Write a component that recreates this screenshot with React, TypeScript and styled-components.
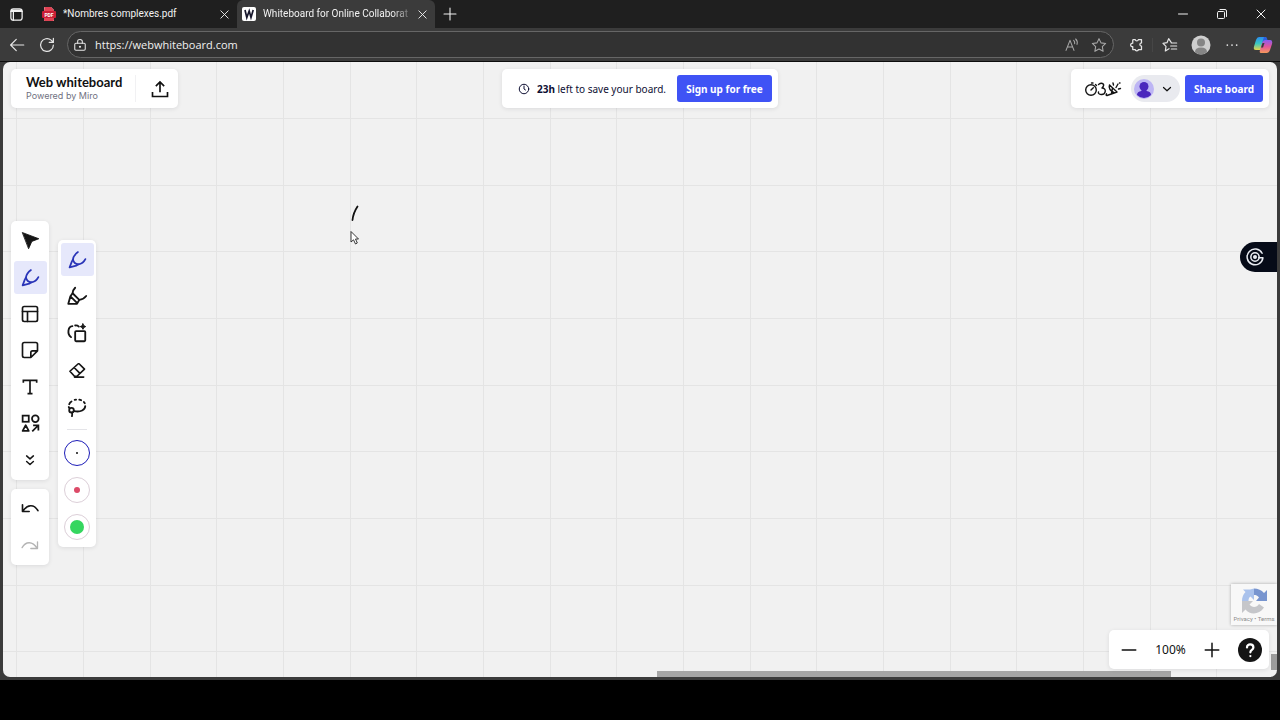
import React, { useState } from "react";
import styled, { createGlobalStyle, css } from "styled-components";

const GlobalStyle = createGlobalStyle`
  *, *::before, *::after { box-sizing: border-box; }
  body { margin: 0; background: #000; }
  button, input { font: inherit; color: inherit; margin: 0; padding: 0; border: 0; background: none; }
  button { cursor: pointer; display: flex; align-items: center; justify-content: center; flex: none; }
  svg { display: block; flex: none; }
`;

const UI_FONT = `"Open Sans", "Noto Sans", sans-serif`;
const BOARD_FONT = `"Noto Sans", "Open Sans", sans-serif`;

/* ---------- browser window ---------- */

const Screen = styled.div`
  display: flex;
  flex-direction: column;
  height: 100vh;
  padding-bottom: 40px;
  background: #000;
  font-family: ${UI_FONT};
`;

const BrowserWindow = styled.div`
  flex: 1;
  min-height: 0;
  display: flex;
  flex-direction: column;
  background: #3b3b3b;
`;

const TitleBar = styled.header`
  display: flex;
  align-items: stretch;
  height: 28px;
  background: #1f1f1f;
  color: #f2f2f2;
  font-family: Roboto, "Open Sans", sans-serif;
  font-size: 10px;
`;

const TabMenuButton = styled.button`
  width: 33px;
`;

const Tab = styled.div<{ $active?: boolean }>`
  display: flex;
  align-items: center;
  width: ${(p) => (p.$active ? 198 : 204)}px;
  padding: 0 6px 0 ${(p) => (p.$active ? 5 : 9)}px;
  border-radius: 6px 6px 0 0;
  background: ${(p) => (p.$active ? "#3b3b3b" : "transparent")};
`;

const TabTitle = styled.span<{ $fade?: boolean }>`
  flex: 1;
  min-width: 0;
  margin-left: 7px;
  overflow: hidden;
  white-space: nowrap;
  line-height: 16px;
  ${(p) =>
    p.$fade &&
    css`
      mask-image: linear-gradient(to right, #000 85%, transparent);
    `}
`;

const TabClose = styled.button`
  width: 14px;
  height: 14px;
`;

const NewTab = styled.button`
  width: 30px;
`;

const WindowControls = styled.div`
  display: flex;
  margin-left: auto;
  button {
    width: 39px;
  }
`;

const NavBar = styled.nav`
  display: flex;
  align-items: center;
  height: 34px;
  padding: 0 2px;
  border-bottom: 1px solid #0c0c0c;
  color: #e6e6e6;
`;

const NavButton = styled.button`
  width: 30px;
  height: 28px;
`;

const AddressBar = styled.label`
  flex: 1;
  display: flex;
  align-items: center;
  height: 27px;
  margin: 0 7px 0 5px;
  padding: 0 1px 0 5px;
  border: 1px solid #666;
  border-radius: 14px;
  background: #323232;
`;

const AddressInput = styled.input`
  flex: 1;
  min-width: 0;
  margin-left: 8px;
  outline: none;
  color: #f0f0f0;
  font-size: 11px;
  line-height: 18px;
`;

const AddressAction = styled.button`
  width: 27px;
  height: 24px;
  color: #a8a8a8;
`;

const ToolbarIcon = styled.button`
  width: 31px;
  height: 28px;
`;

const ToolbarDivider = styled.span`
  width: 1px;
  height: 14px;
  margin-right: 1px;
  background: #464646;
`;

/* ---------- board ---------- */

const line = (dir: string, at: number) =>
  `linear-gradient(${dir}, transparent ${at}px, #e4e4e4 ${at}px, #e4e4e4 ${at + 1}px, transparent ${at + 1}px)`;

const Board = styled.main`
  position: relative;
  flex: 1;
  min-height: 0;
  margin: 0 3px 3px;
  overflow: hidden;
  border-radius: 7px;
  background-color: #f1f1f1;
  background-image: ${[13, 80, 147].map((n) => line("to right", n)).join(",")},
    ${[56, 123, 189].map((n) => line("to bottom", n)).join(",")};
  background-size: 200px 200px;
  color: #111;
  font-family: ${BOARD_FONT};
`;

const Ink = styled.svg`
  position: absolute;
  inset: 0;
`;

const panel = css`
  background: #fff;
  border-radius: 5px;
  box-shadow: 0 1px 4px rgba(30, 30, 40, 0.1);
`;

const TopRow = styled.div`
  position: relative;
  display: grid;
  grid-template-columns: 1fr auto 1fr;
  align-items: start;
  padding: 7px 8px 0;
`;

const Brand = styled.section`
  ${panel}
  justify-self: start;
  display: flex;
  align-items: center;
  height: 39px;
  padding-left: 15px;
  font-family: Inter, sans-serif;
`;

const BrandText = styled.div`
  display: flex;
  flex-direction: column;
  padding: 0 13px 1px 0;
  border-right: 1px solid #f1f1f3;
`;

const BrandName = styled.strong`
  font-family: Lato, Inter, sans-serif;
  font-size: 13px;
  line-height: 15px;
  font-weight: 700;
`;

const BrandNote = styled.span`
  color: #70717f;
  font-size: 9px;
  line-height: 11px;
`;

const ExportButton = styled.button`
  width: 36px;
  height: 36px;
  margin-left: 6px;
`;

const Notice = styled.section`
  ${panel}
  display: flex;
  align-items: center;
  height: 39px;
  padding: 0 6px 0 16px;
  color: #0e0f33;
  font-size: 10px;
`;

const NoticeText = styled.p`
  margin: 0 11px 0 7px;
  line-height: 16px;
  white-space: nowrap;
`;

const PrimaryButton = styled.button<{ $width: number }>`
  width: ${(p) => p.$width}px;
  height: 27px;
  border-radius: 3px;
  background: #3f53f5;
  color: #fff;
  font-size: 10px;
  font-weight: 700;
  line-height: 16px;
  white-space: nowrap;
`;

const Account = styled.section`
  ${panel}
  justify-self: end;
  display: flex;
  align-items: center;
  height: 39px;
  padding: 0 6px 0 12px;
`;

const Reactions = styled.button`
  width: 40px;
  height: 30px;
`;

const ProfileButton = styled.button`
  gap: 7px;
  height: 27px;
  margin: 0 5px 0 8px;
  padding: 0 7px 0 3px;
  border-radius: 14px;
  background: #e9eaef;
`;

const Rails = styled.div`
  position: absolute;
  top: 47px;
  bottom: 0;
  left: 8px;
  display: flex;
  align-items: center;
  gap: 9px;
`;

const RailColumn = styled.div`
  display: flex;
  flex-direction: column;
  gap: 9px;
`;

const Rail = styled.div<{ $height?: number }>`
  ${panel}
  display: flex;
  flex-direction: column;
  align-items: center;
  justify-content: space-between;
  gap: 3px;
  width: 38px;
  height: ${(p) => (p.$height ? `${p.$height}px` : "auto")};
  padding: 3px;
`;

const PenRail = styled(Rail)`
  gap: 4px;
`;

const Tool = styled.button<{ $active?: boolean }>`
  width: 33px;
  height: 33px;
  border-radius: 3px;
  color: ${(p) => (p.$active ? "#2a35b8" : "#151515")};
  background: ${(p) => (p.$active ? "#e6e8fb" : "transparent")};
  &:disabled {
    color: #b4b4b4;
  }
`;

const RailDivider = styled.hr`
  width: 20px;
  height: 1px;
  margin: 1px 0 3px;
  border: 0;
  background: #e4e4e8;
`;

const Swatch = styled.button<{ $selected?: boolean }>`
  width: 26px;
  height: 26px;
  margin: 3px 0 4px;
  border: ${(p) => (p.$selected ? "1px solid #1c1cb8" : "1px solid #dccfd8")};
  border-radius: 50%;
`;

const Dot = styled.span<{ $size: number; $color: string }>`
  width: ${(p) => p.$size}px;
  height: ${(p) => p.$size}px;
  border-radius: 50%;
  background: ${(p) => p.$color};
`;

const RecorderButton = styled.button`
  position: absolute;
  top: 180px;
  right: 0;
  width: 37px;
  height: 30px;
  padding-right: 7px;
  border-radius: 15px 0 0 15px;
  background: #060b18;
  color: #e9ecf2;
`;

const Captcha = styled.aside`
  position: absolute;
  right: 0;
  bottom: 52px;
  display: flex;
  flex-direction: column;
  align-items: center;
  width: 46px;
  height: 41px;
  padding-top: 3px;
  background: #f8f8f8;
  box-shadow: 0 0 3px rgba(0, 0, 0, 0.3);
  color: #8c8c8c;
  font-family: Roboto, sans-serif;
  font-size: 6px;
  line-height: 8px;
  a {
    color: inherit;
    text-decoration: none;
  }
`;

const ZoomPanel = styled.section`
  ${panel}
  position: absolute;
  right: 8px;
  bottom: 8px;
  display: flex;
  align-items: center;
  height: 39px;
  padding: 0 7px 0 5px;
  font-size: 12px;
`;

const ZoomStep = styled.button`
  width: 30px;
  height: 30px;
`;

const ZoomValue = styled.output`
  width: 53px;
  text-align: center;
  line-height: 18px;
`;

const HelpButton = styled.button`
  width: 24px;
  height: 24px;
  margin-left: 11px;
  border-radius: 50%;
  background: #151515;
  color: #fff;
`;

const HorizontalThumb = styled.div`
  position: absolute;
  right: 106px;
  bottom: 0;
  width: 514px;
  height: 6px;
  background: #a5a5a5;
`;

const VerticalThumb = styled.div`
  position: absolute;
  right: 0;
  bottom: 7px;
  width: 6px;
  height: 16px;
  background: #9c9c9c;
`;

/* ---------- icons ---------- */

type IconProps = { size?: number; width?: number; children: React.ReactNode };

const Icon = ({ size = 20, width = 2, children }: IconProps) => (
  <svg
    width={size}
    height={size}
    viewBox="0 0 24 24"
    fill="none"
    stroke="currentColor"
    strokeWidth={width}
    strokeLinecap="round"
    strokeLinejoin="round"
    aria-hidden="true"
  >
    {children}
  </svg>
);

const CloseIcon = ({ size = 12 }: { size?: number }) => (
  <Icon size={size}>
    <path d="M4 4l16 16M20 4L4 20" />
  </Icon>
);

const PenIcon = () => (
  <Icon size={21}>
    <path d="M12.500 3.500C9 6 7.200 9 6.800 12L5.500 14.500L3 21L10.500 19L13 17.500C16.500 17 19.500 14.500 21 11.500" />
    <path d="M6.800 12C7.500 15 9.500 17.200 13 17.500" />
  </Icon>
);

const HighlighterIcon = () => (
  <Icon size={22}>
    <path d="M10 3C8 5 7.200 7 7.200 9L14.500 16.200C17.500 16 20 14.500 22 12" />
    <path d="M7.200 9L4.800 12.300L2.500 20.500H12L14.500 16.200M4.800 12.300L12 19.500" />
  </Icon>
);

const SmartDrawIcon = () => (
  <Icon size={22}>
    <rect x="10" y="10" width="11" height="11" rx="1" />
    <path d="M5.500 16.500C1 13 2 5 7 4.500M10 3.800C12 3.500 13 4 14 5" />
    <path d="M18.500 2l1 2 2 1-2 1-1 2-1-2-2-1 2-1z" fill="currentColor" strokeWidth="1" />
  </Icon>
);

const EraserIcon = () => (
  <Icon size={20}>
    <path d="M13.500 4.500L3.500 13.500L9 19.500H12L21 11L14.500 4.500zM8.500 9L15.500 16M9 20.500H20" />
  </Icon>
);

const LassoIcon = () => (
  <Icon size={22}>
    <path d="M3.500 9C4 7.500 5 6.500 6 6M9.500 4.300L11 4M14.500 4L16.500 4.600M19.500 6.500L20.500 8" />
    <path d="M21 11C21 15 16 18 9 16.500" />
    <circle cx="6" cy="15.500" r="2.500" />
    <path d="M6.500 18C7 19.500 7 20.500 6.500 22M3.500 13L3 12" />
  </Icon>
);

const CursorIcon = () => (
  <Icon size={21} width={1}>
    <path d="M3 3L21.500 10L13.500 13L10 21z" fill="currentColor" />
  </Icon>
);

const TemplateIcon = () => (
  <Icon>
    <rect x="3" y="3" width="18" height="18" rx="2" />
    <path d="M3 9H21M9 9V21" />
  </Icon>
);

const StickyIcon = () => (
  <Icon>
    <path d="M5 3H19Q21 3 21 5V13L13 21H5Q3 21 3 19V5Q3 3 5 3zM21 13H15Q13 13 13 15V21" />
  </Icon>
);

const TextIcon = () => (
  <Icon>
    <path d="M4 7V4H20V7M12 4V20M9 20H15" strokeLinecap="butt" strokeLinejoin="miter" />
  </Icon>
);

const ShapesIcon = () => (
  <Icon size={21}>
    <rect x="3" y="3" width="7" height="7" strokeLinejoin="miter" />
    <circle cx="17.500" cy="6.500" r="3.800" />
    <path d="M6.500 14L10 20.500H3z" />
    <path d="M14 21L21 14M15 14H21V20" strokeLinecap="butt" strokeLinejoin="miter" />
  </Icon>
);

const MoreIcon = () => (
  <Icon size={18}>
    <path d="M7.500 6.500L12 10.500L16.500 6.500M7.500 14L12 18L16.500 14" />
  </Icon>
);

const UndoIcon = () => (
  <Icon size={20}>
    <path d="M3 7V15H11M3.500 14.500C9 6 17 6 21.500 14" />
  </Icon>
);

const RedoIcon = () => (
  <Icon size={20} width={1.6}>
    <path d="M21 7V15H13M20.500 14.500C15 6 7 6 2.500 14" />
  </Icon>
);

const PdfIcon = () => (
  <svg width="14" height="14" viewBox="0 0 14 14" aria-hidden="true">
    <path d="M3 0H9L12 3V14H3Q2 14 2 13V1Q2 0 3 0z" fill="#f3dcdf" />
    <path d="M2.500 0H9L12 3V5H2zM2 10H12V13Q12 14 11 14H3Q2 14 2 13z" fill="#df4253" />
    <rect y="4" width="14" height="7" rx="1" fill="#c91f35" />
    <text x="7" y="9.500" textAnchor="middle" fontFamily="Roboto, sans-serif" fontSize="5" fontWeight="700" fill="#fff">
      PDF
    </text>
  </svg>
);

const SiteIcon = () => (
  <svg width="14" height="14" viewBox="0 0 14 14" aria-hidden="true">
    <rect width="14" height="14" rx="2" fill="#fff" />
    <path d="M3 3L4.800 10.500L7.200 4L9 10.500L11.200 3" fill="none" stroke="#17172c" strokeWidth="1.700" />
  </svg>
);

const CopilotIcon = () => (
  <svg width="20" height="20" viewBox="0 0 20 20" aria-hidden="true">
    <defs>
      <linearGradient id="cool" x1="0" y1="0" x2="0" y2="1">
        <stop offset="0" stopColor="#2b8cf0" />
        <stop offset="0.5" stopColor="#39c7c0" />
        <stop offset="1" stopColor="#e8d44a" />
      </linearGradient>
      <linearGradient id="warm" x1="0" y1="0" x2="0" y2="1">
        <stop offset="0" stopColor="#8a5cf0" />
        <stop offset="0.5" stopColor="#e3559c" />
        <stop offset="1" stopColor="#f59a5a" />
      </linearGradient>
    </defs>
    <path d="M6 2H12Q14 2 13.500 4L11 13Q10.500 15 8 15H3Q0 15 1 11.500L3 5Q4 2 6 2z" fill="url(#cool)" />
    <path d="M12 5H17Q20 5 19 9L17 15Q16 18 13.500 18H8Q6 18 7 15L9 8Q10 5 12 5z" fill="url(#warm)" />
    <path d="M11 2H12Q14 2 14.500 5H12Q10 5 9 8z" fill="#2d5ee0" />
    <path d="M9.500 8H11.500L10 12.500H8z" fill="#3b3b3b" />
  </svg>
);

const BrowserAvatar = () => (
  <svg width="20" height="20" viewBox="0 0 20 20" aria-hidden="true">
    <circle cx="10" cy="10" r="9.500" fill="#cfcfcf" />
    <circle cx="10" cy="7.500" r="4" fill="#868686" />
    <path d="M4 17Q4 12.500 10 12.500T16 17Q13 19.500 10 19.500T4 17z" fill="#868686" />
  </svg>
);

const ReactionsIcon = () => (
  <svg width="38" height="18" viewBox="0 0 38 18" fill="none" stroke="#151515" strokeWidth="1.400" strokeLinecap="round" strokeLinejoin="round" aria-hidden="true">
    <circle cx="7" cy="10" r="5.300" />
    <path d="M7 10L9.300 7.700M7.500 3L9 3M11.500 4.500L12.500 5.500" />
    <path d="M14.500 4.500C18 2 22 4 18 8C23 8 22 15 17 14.500C15 14.500 14 13 14.500 12" />
    <path d="M25.500 5L33 12L23 15.500Q21.500 15.500 22.500 13.800M25.500 5Q24.500 7.500 26 9.500T30.500 13M28.500 8L27.500 13.500" />
    <path d="M29.500 5L29 3M32 7.500L34 4M34.500 9L36.500 8.500M35.500 3H36" />
  </svg>
);

const BoardAvatar = () => (
  <svg width="20" height="20" viewBox="0 0 20 20" aria-hidden="true">
    <circle cx="10" cy="10" r="10" fill="#bdb5f4" />
    <circle cx="10" cy="7.500" r="4.500" fill="#4a27bd" />
    <path d="M7.500 10H12.500V12Q17 12.500 17 16Q14 19 10 19T3 16Q3 12.500 7.500 12z" fill="#4a27bd" />
  </svg>
);

const CaptchaLogo = () => (
  <svg width="28" height="28" viewBox="0 0 28 28" aria-hidden="true">
    <path d="M14 1.500C18 1.500 21.500 3 24 6L27 3V14H16L19 10.500C17.500 8.500 16 8 14 8z" fill="#7895cf" />
    <path d="M14 1.500V13L10.500 9.500C9 10.500 8.500 12 8.500 14H2C2 10.500 3 7.500 5.500 5L3 2.500H10z" fill="#aac2ec" />
    <path d="M2 14H13L9.500 17.500C12 21 17 20.500 19 17L24 20.500C19 28 10 28 5.500 22.500L2 26z" fill="#c5c6ca" />
  </svg>
);

/* ---------- page ---------- */

const TOOLS = [
  { name: "Select", icon: <CursorIcon /> },
  { name: "Pen", icon: <PenIcon /> },
  { name: "Templates", icon: <TemplateIcon /> },
  { name: "Sticky note", icon: <StickyIcon /> },
  { name: "Text", icon: <TextIcon /> },
  { name: "Shapes", icon: <ShapesIcon /> },
  { name: "More", icon: <MoreIcon /> },
];

const PENS = [
  { name: "Pen", icon: <PenIcon /> },
  { name: "Highlighter", icon: <HighlighterIcon /> },
  { name: "Smart drawing", icon: <SmartDrawIcon /> },
  { name: "Eraser", icon: <EraserIcon /> },
  { name: "Lasso", icon: <LassoIcon /> },
];

const SWATCHES = [
  { name: "Black, thin", size: 2, color: "#111" },
  { name: "Red, medium", size: 6, color: "#dc4a68" },
  { name: "Green, thick", size: 14, color: "#35d65f" },
];

export default function App() {
  const [tool, setTool] = useState(1);
  const [pen, setPen] = useState(0);
  const [swatch, setSwatch] = useState(0);
  const [url, setUrl] = useState("https://webwhiteboard.com");

  return (
    <Screen>
      <GlobalStyle />
      <BrowserWindow>
        <TitleBar>
          <TabMenuButton aria-label="Tab actions">
            <Icon size={15}>
              <rect x="3" y="3" width="18" height="18" rx="4" />
              <path d="M3 7H21M7 7V21M4 5H20" />
            </Icon>
          </TabMenuButton>
          <Tab>
            <PdfIcon />
            <TabTitle>*Nombres complexes.pdf</TabTitle>
            <TabClose aria-label="Close tab">
              <CloseIcon size={11} />
            </TabClose>
          </Tab>
          <Tab $active>
            <SiteIcon />
            <TabTitle $fade>Whiteboard for Online Collaborat</TabTitle>
            <TabClose aria-label="Close tab">
              <CloseIcon size={11} />
            </TabClose>
          </Tab>
          <NewTab aria-label="New tab">
            <Icon size={16} width={1.6}>
              <path d="M12 3V21M3 12H21" />
            </Icon>
          </NewTab>
          <WindowControls>
            <button aria-label="Minimize">
              <Icon size={12}>
                <path d="M3 12H21" />
              </Icon>
            </button>
            <button aria-label="Restore">
              <Icon size={12}>
                <rect x="3" y="7" width="14" height="14" rx="2" />
                <path d="M8 3H18Q21 3 21 6V17" />
              </Icon>
            </button>
            <button aria-label="Close window">
              <CloseIcon />
            </button>
          </WindowControls>
        </TitleBar>

        <NavBar>
          <NavButton aria-label="Back">
            <Icon size={18} width={1.6}>
              <path d="M21 12H4M11 4.500L3.500 12L11 19.500" />
            </Icon>
          </NavButton>
          <NavButton aria-label="Reload">
            <Icon size={18} width={1.6}>
              <path d="M20.500 12A8.500 8.500 0 1 1 17.500 5.500L20 8M20.500 3V8.500H15" />
            </Icon>
          </NavButton>
          <AddressBar>
            <Icon size={14} width={1.8}>
              <rect x="3" y="9" width="18" height="12" rx="2" />
              <path d="M8 9V6Q8 2.500 12 2.500T16 6V9" />
              <circle cx="12" cy="15" r="1" fill="currentColor" />
            </Icon>
            <AddressInput aria-label="Address" value={url} onChange={(e) => setUrl(e.target.value)} />
            <AddressAction aria-label="Read aloud">
              <Icon size={16} width={1.6}>
                <path d="M3 20L9 5L15 20M5 15H13M14.500 5Q16.500 7 16 10M17.500 3Q21 6.500 19.500 11" />
              </Icon>
            </AddressAction>
            <AddressAction aria-label="Add to favorites">
              <Icon size={16} width={1.6}>
                <path d="M12 2.500L15 8.800L22 9.700L17 14.500L18.200 21.500L12 18L5.800 21.500L7 14.500L2 9.700L9 8.800z" />
              </Icon>
            </AddressAction>
          </AddressBar>
          <ToolbarIcon aria-label="Extensions">
            <Icon size={15}>
              <path d="M7 4H10C10.500 7 14.500 7 15 4H20V9.500C16.500 10 16.500 14 20 14.500V20H15C15 23 10 23 10 20H6V15.500C1.500 16 1.500 9.500 6 10V5Q6 4 7 4z" />
            </Icon>
          </ToolbarIcon>
          <ToolbarDivider />
          <ToolbarIcon aria-label="Favorites">
            <Icon size={16} width={1.8}>
              <path d="M14 8.500L10 2.500L7.500 8.500L1.500 9.500L6 14L5 21L10.500 17.500M14 9H22M13 13.500H22M14 18H22" />
            </Icon>
          </ToolbarIcon>
          <ToolbarIcon aria-label="Profile">
            <BrowserAvatar />
          </ToolbarIcon>
          <ToolbarIcon aria-label="Settings and more">
            <Icon size={14}>
              <path d="M4 12h.01M12 12h.01M20 12h.01" strokeWidth="3" />
            </Icon>
          </ToolbarIcon>
          <ToolbarIcon aria-label="Copilot">
            <CopilotIcon />
          </ToolbarIcon>
        </NavBar>

        <Board>
          <Ink width="600" height="400" aria-hidden="true">
            <path d="M354.500 144.500C351.500 149 350 153 349.500 158" fill="none" stroke="#111" strokeWidth="1.800" strokeLinecap="round" />
            <path d="M348 169.500V180L350.500 177.800L352.500 182L354.300 181L352.500 177H355.500z" fill="#fff" stroke="#222" strokeWidth="0.900" />
          </Ink>

          <TopRow>
            <Brand>
              <BrandText>
                <BrandName>Web whiteboard</BrandName>
                <BrandNote>Powered by Miro</BrandNote>
              </BrandText>
              <ExportButton aria-label="Export board">
                <Icon size={20}>
                  <path d="M12 16V4M7 8.500L12 3.500L17 8.500M3 15.500V21H21V15.500" strokeLinecap="butt" strokeLinejoin="miter" />
                </Icon>
              </ExportButton>
            </Brand>

            <Notice>
              <Icon size={12}>
                <circle cx="12" cy="12" r="9.500" />
                <path d="M12 6V12L15 14" />
              </Icon>
              <NoticeText>
                <b>23h</b> left to save your board.
              </NoticeText>
              <PrimaryButton $width={95}>Sign up for free</PrimaryButton>
            </Notice>

            <Account>
              <Reactions aria-label="Reactions and timer">
                <ReactionsIcon />
              </Reactions>
              <ProfileButton aria-label="Account menu">
                <BoardAvatar />
                <Icon size={12} width={2.4}>
                  <path d="M5 9L12 15.500L19 9" />
                </Icon>
              </ProfileButton>
              <PrimaryButton $width={78}>Share board</PrimaryButton>
            </Account>
          </TopRow>

          <Rails>
            <RailColumn>
              <Rail $height={259} role="toolbar" aria-label="Tools">
                {TOOLS.map((t, i) => (
                  <Tool key={t.name} aria-label={t.name} $active={i === tool} onClick={() => setTool(i)}>
                    {t.icon}
                  </Tool>
                ))}
              </Rail>
              <Rail $height={76} role="toolbar" aria-label="History">
                <Tool aria-label="Undo">
                  <UndoIcon />
                </Tool>
                <Tool aria-label="Redo" disabled>
                  <RedoIcon />
                </Tool>
              </Rail>
            </RailColumn>
            <PenRail role="toolbar" aria-label="Drawing tools">
              {PENS.map((p, i) => (
                <Tool key={p.name} aria-label={p.name} $active={i === pen} onClick={() => setPen(i)}>
                  {p.icon}
                </Tool>
              ))}
              <RailDivider />
              {SWATCHES.map((s, i) => (
                <Swatch key={s.name} aria-label={s.name} $selected={i === swatch} onClick={() => setSwatch(i)}>
                  <Dot $size={s.size} $color={s.color} />
                </Swatch>
              ))}
            </PenRail>
          </Rails>

          <RecorderButton aria-label="Open recorder">
            <Icon size={20} width={1.8}>
              <path d="M20.500 7.500A9.500 9.500 0 1 0 21.500 13H16.500" />
              <circle cx="12" cy="12" r="5" />
              <circle cx="12" cy="12" r="1.500" fill="currentColor" />
            </Icon>
          </RecorderButton>

          <Captcha>
            <CaptchaLogo />
            <span>
              <a href="#privacy">Privacy</a> • <a href="#terms">Terms</a>
            </span>
          </Captcha>

          <HorizontalThumb />
          <VerticalThumb />

          <ZoomPanel>
            <ZoomStep aria-label="Zoom out">
              <Icon size={18}>
                <path d="M3 12H21" />
              </Icon>
            </ZoomStep>
            <ZoomValue>100%</ZoomValue>
            <ZoomStep aria-label="Zoom in">
              <Icon size={18}>
                <path d="M12 3V21M3 12H21" />
              </Icon>
            </ZoomStep>
            <HelpButton aria-label="Help">
              <Icon size={18} width={3}>
                <path d="M8 8.500C8 3 16.500 3.500 16.500 8.500C16.500 12 12.500 11.500 12.500 15M12.500 20V20.010" />
              </Icon>
            </HelpButton>
          </ZoomPanel>
        </Board>
      </BrowserWindow>
    </Screen>
  );
}
